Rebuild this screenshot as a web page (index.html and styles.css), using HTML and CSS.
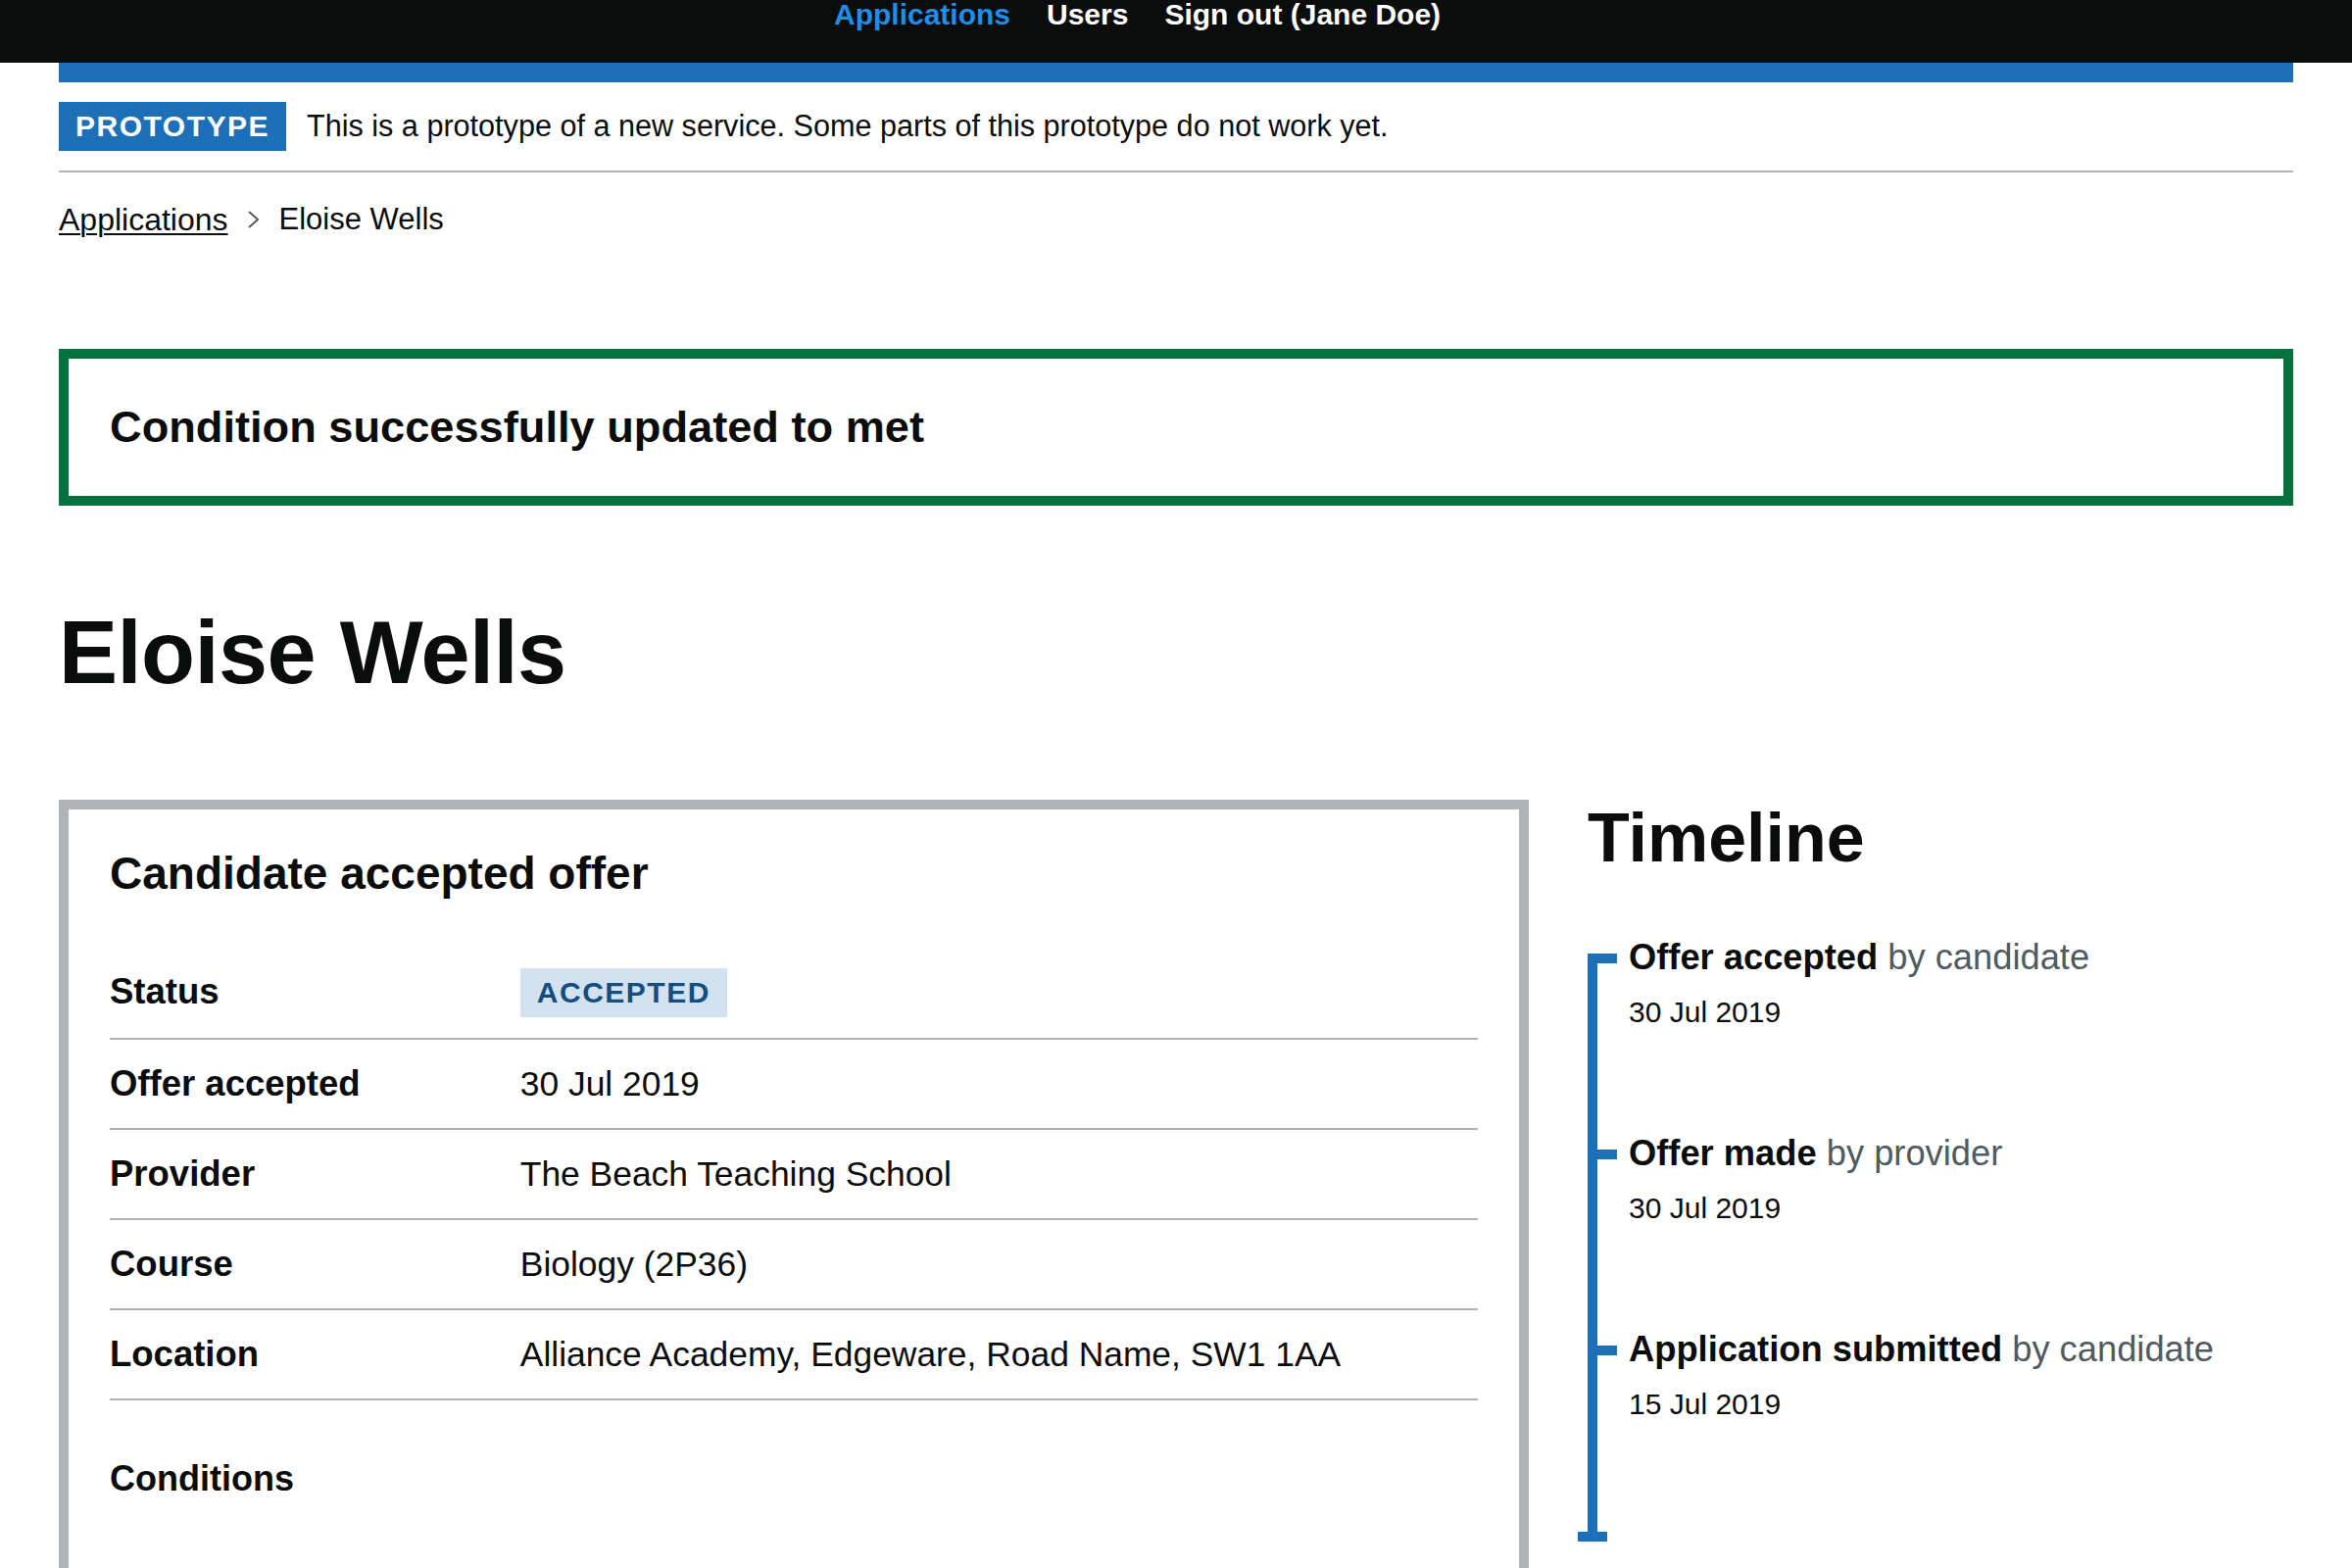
FILE: index.html
```html
<!DOCTYPE html>
<html lang="en">
<head>
<meta charset="utf-8">
<title>Eloise Wells - Applications</title>
<link rel="stylesheet" href="styles.css">
</head>
<body>
<header class="header">
  <div class="header-inner">
    <nav class="nav">
      <a class="nav-link nav-link-active" href="#">Applications</a>
      <a class="nav-link" href="#">Users</a>
      <a class="nav-link" href="#">Sign out (Jane Doe)</a>
    </nav>
  </div>
</header>
<div class="container">
  <div class="header-rule"></div>
  <div class="phase-banner">
    <strong class="tag tag-phase">Prototype</strong>
    <span class="phase-text">This is a prototype of a new service. Some parts of this prototype do not work yet.</span>
  </div>
  <nav class="breadcrumbs">
    <a class="breadcrumb-link" href="#">Applications</a>
    <svg class="chevron" width="14" height="20" viewBox="0 0 14 20"><polyline points="2,2 11,10 2,18" fill="none" stroke="#505a5f" stroke-width="2"/></svg>
    <span class="breadcrumb-current">Eloise Wells</span>
  </nav>
  <main class="main">
    <div class="notification">
      <p class="notification-text">Condition successfully updated to met</p>
    </div>
    <h1 class="title">Eloise Wells</h1>
    <div class="grid-row">
      <div class="col-two-thirds">
        <section class="card">
          <h2 class="card-heading">Candidate accepted offer</h2>
          <dl class="summary">
            <div class="summary-row">
              <dt class="summary-key">Status</dt>
              <dd class="summary-value"><strong class="tag tag-accepted">Accepted</strong></dd>
            </div>
            <div class="summary-row">
              <dt class="summary-key">Offer accepted</dt>
              <dd class="summary-value">30 Jul 2019</dd>
            </div>
            <div class="summary-row">
              <dt class="summary-key">Provider</dt>
              <dd class="summary-value">The Beach Teaching School</dd>
            </div>
            <div class="summary-row">
              <dt class="summary-key">Course</dt>
              <dd class="summary-value">Biology (2P36)</dd>
            </div>
            <div class="summary-row">
              <dt class="summary-key">Location</dt>
              <dd class="summary-value">Alliance Academy, Edgeware, Road Name, SW1 1AA</dd>
            </div>
          </dl>
          <h3 class="sub-heading">Conditions</h3>
        </section>
      </div>
      <div class="col-one-third">
        <h2 class="timeline-heading">Timeline</h2>
        <ol class="timeline">
          <li class="timeline-item">
            <h3 class="timeline-title">Offer accepted <span class="timeline-by">by candidate</span></h3>
            <p class="timeline-date">30 Jul 2019</p>
          </li>
          <li class="timeline-item">
            <h3 class="timeline-title">Offer made <span class="timeline-by">by provider</span></h3>
            <p class="timeline-date">30 Jul 2019</p>
          </li>
          <li class="timeline-item">
            <h3 class="timeline-title">Application submitted <span class="timeline-by">by candidate</span></h3>
            <p class="timeline-date">15 Jul 2019</p>
          </li>
        </ol>
      </div>
    </div>
  </main>
</div>
</body>
</html>
```
FILE: styles.css
```css
* { box-sizing: border-box; }

body {
  margin: 0;
  background: #ffffff;
  color: #0b0c0c;
  font-family: "Liberation Sans", Arial, sans-serif;
}

.header {
  background: #0b0c0c;
  height: 64px;
}

.header-inner {
  padding: 0 60px;
}

.nav {
  display: flex;
  gap: 37px;
  margin-left: 791px;
  line-height: 30px;
}

.nav-link {
  color: #ffffff;
  font-weight: 700;
  font-size: 30px;
  text-decoration: none;
}

.nav-link-active {
  color: #1d8feb;
}

.container {
  padding: 0 60px;
}

.header-rule {
  height: 20px;
  background: #1d70b8;
}

.phase-banner {
  display: flex;
  align-items: baseline;
  gap: 21px;
  padding: 20px 0;
  border-bottom: 2px solid #b1b4b6;
}

.tag {
  display: inline-block;
  height: 50px;
  line-height: 50px;
  padding: 0 17px;
  font-size: 30px;
  font-weight: 700;
  letter-spacing: 1.5px;
  text-transform: uppercase;
}

.tag-phase {
  background: #1d70b8;
  color: #ffffff;
}

.tag-accepted {
  background: #d2e2f1;
  color: #144e81;
  vertical-align: top;
}

.phase-text {
  font-size: 30.6px;
  line-height: 40px;
}

.breadcrumbs {
  display: flex;
  align-items: center;
  margin-top: 28px;
  font-size: 32px;
  line-height: 40px;
}

.breadcrumb-link {
  color: #0b0c0c;
  text-decoration: underline;
  text-decoration-thickness: 2px;
  text-underline-offset: 3px;
}

.breadcrumb-current {
  font-size: 31px;
}

.chevron {
  margin: 0 19px 0 19px;
}

.main {
  padding-top: 112px;
}

.notification {
  border: 10px solid #00703c;
  padding: 40px 42px;
}

.notification-text {
  margin: 0;
  font-size: 45.2px;
  line-height: 60px;
  font-weight: 700;
}

.title {
  margin: 100px 0 100px;
  font-size: 90px;
  line-height: 100px;
  font-weight: 700;
  letter-spacing: -0.5px;
}

.grid-row {
  display: flex;
  margin: 0 -30px;
}

.col-two-thirds {
  width: 66.6667%;
  padding: 0 30px;
}

.col-one-third {
  width: 33.3333%;
  padding: 0 30px;
}

.card {
  border: 10px solid #b1b4b6;
  padding: 38px 42px 200px;
}

.card-heading {
  margin: 0 0 48px;
  font-size: 46px;
  line-height: 55px;
  font-weight: 700;
}

.summary {
  margin: 0;
}

.summary-row {
  display: flex;
  border-bottom: 2px solid #b1b4b6;
}

.summary-key,
.summary-value {
  margin: 0;
  padding: 21px 0;
  font-size: 35.4px;
  line-height: 48px;
}

.summary-key {
  width: 30%;
  font-size: 36.5px;
  font-weight: 700;
}

.summary-value {
  flex: 1;
}

.sub-heading {
  margin: 56px 0 0;
  font-size: 36px;
  line-height: 48px;
  font-weight: 700;
}

.timeline-heading {
  margin: 0 0 59px;
  font-size: 70px;
  line-height: 78px;
  font-weight: 700;
}

.timeline {
  position: relative;
  list-style: none;
  margin: 0;
  padding: 0 0 20px;
}

.timeline::before {
  content: "";
  position: absolute;
  left: 0;
  top: 20px;
  bottom: 0;
  width: 10px;
  background: #1d70b8;
}

.timeline::after {
  content: "";
  position: absolute;
  left: -10px;
  bottom: 0;
  width: 30px;
  height: 10px;
  background: #1d70b8;
}

.timeline-item {
  position: relative;
  padding: 0 0 100px 42px;
}

.timeline-item::before {
  content: "";
  position: absolute;
  left: 0;
  top: 20px;
  width: 30px;
  height: 10px;
  background: #1d70b8;
}

.timeline-title {
  margin: 0;
  font-size: 36.3px;
  line-height: 48px;
  font-weight: 700;
}

.timeline-by {
  font-weight: 400;
  color: #505a5f;
}

.timeline-date {
  margin: 12px 0 0;
  font-size: 30px;
  line-height: 40px;
}
```
